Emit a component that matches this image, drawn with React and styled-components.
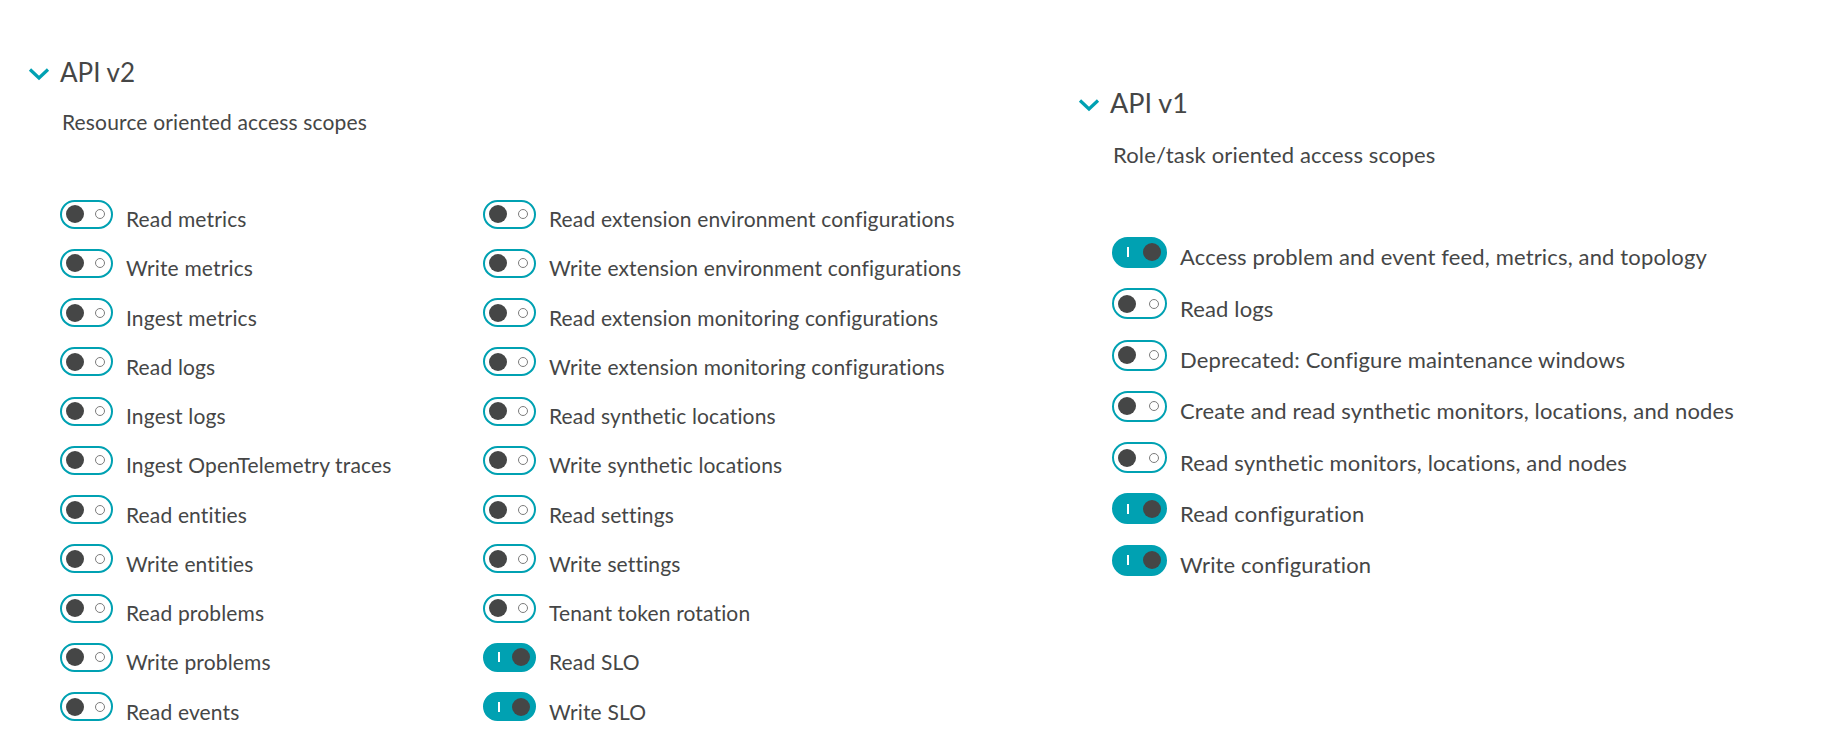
import styled, { createGlobalStyle } from "styled-components";

const GlobalStyle = createGlobalStyle`
  body {
    margin: 0;
    background: #ffffff;
    font-family: "Lato", "Open Sans", sans-serif;
    color: #454646;
  }
`;

const Page = styled.div`
  display: flex;
  width: 1824px;
  height: 736px;
  overflow: hidden;
  box-sizing: border-box;
`;

const Section = styled.section`
  display: flex;
  flex-direction: column;
  padding-top: ${p => (p.$big ? "85px" : "55px")};
  padding-left: 28px;
  width: ${p => (p.$big ? "auto" : "1050px")};
  box-sizing: border-box;
`;

const Header = styled.div`
  display: flex;
  align-items: flex-start;
  gap: 10px;
`;

const ChevronBox = styled.span`
  display: flex;
  margin-top: ${p => (p.$big ? "13px" : "12px")};
`;

const Title = styled.h2`
  margin: 2px 0 0;
  font-size: ${p => (p.$big ? "27px" : "26px")};
  line-height: 1.2;
  font-weight: 400;
  color: #454646;
`;

const Subtitle = styled.p`
  margin: ${p => (p.$big ? "23px 0 58px 35px" : "21px 0 55px 34px")};
  font-size: ${p => (p.$big ? "22px" : "21px")};
  letter-spacing: 0.15px;
  line-height: 1.2;
  color: #454646;
`;

const ScopeGrid = styled.div`
  display: grid;
  grid-auto-flow: column;
  grid-template-rows: repeat(${p => p.$rows}, ${p => (p.$big ? "51.3px" : "49.25px")});
  grid-template-columns: ${p => (p.$big ? "auto" : "423px 423px")};
  padding-left: ${p => (p.$big ? "34px" : "32px")};
`;

const Row = styled.label`
  display: flex;
  align-items: center;
  gap: 13px;
  font-size: ${p => (p.$big ? "22px" : "21px")};
  letter-spacing: 0.15px;
  color: #454646;
  white-space: nowrap;
`;

const LabelText = styled.span`
  margin-top: 9px;
`;

const Track = styled.span`
  position: relative;
  display: inline-flex;
  align-items: center;
  flex-shrink: 0;
  width: ${p => (p.$big ? "55px" : "53px")};
  height: ${p => (p.$big ? "31px" : "29px")};
  border: 2px solid #00a1b2;
  border-radius: 16px;
  box-sizing: border-box;
  background: ${p => (p.$on ? "#00a1b2" : "#ffffff")};
`;

const Knob = styled.span`
  position: absolute;
  top: 50%;
  ${p => (p.$on ? "right: 4px;" : "left: 4px;")}
  width: 18px;
  height: 18px;
  margin-top: -9px;
  border-radius: 50%;
  background: #454646;
`;

const OffMark = styled.span`
  position: absolute;
  top: 50%;
  right: 6px;
  width: 10px;
  height: 10px;
  margin-top: -5px;
  border-radius: 50%;
  border: 1.5px solid #7c7c7c;
  box-sizing: border-box;
`;

const OnMark = styled.span`
  position: absolute;
  top: 50%;
  left: 13px;
  width: 2px;
  height: 10px;
  margin-top: -5px;
  background: #ffffff;
`;

const Chevron = ({ big }) => (
  <ChevronBox $big={big}>
    <svg width="22" height="14" viewBox="0 0 22 14">
      <path d="M2 2.5 L11 11 L20 2.5" fill="none" stroke="#00a1b2" strokeWidth="3.2" />
    </svg>
  </ChevronBox>
);

const Toggle = ({ on, big }) => (
  <Track $on={on} $big={big}>
    {on ? <OnMark /> : <OffMark />}
    <Knob $on={on} />
  </Track>
);

const v2Scopes = [
  ["Read metrics", false],
  ["Write metrics", false],
  ["Ingest metrics", false],
  ["Read logs", false],
  ["Ingest logs", false],
  ["Ingest OpenTelemetry traces", false],
  ["Read entities", false],
  ["Write entities", false],
  ["Read problems", false],
  ["Write problems", false],
  ["Read events", false],
  ["Read extension environment configurations", false],
  ["Write extension environment configurations", false],
  ["Read extension monitoring configurations", false],
  ["Write extension monitoring configurations", false],
  ["Read synthetic locations", false],
  ["Write synthetic locations", false],
  ["Read settings", false],
  ["Write settings", false],
  ["Tenant token rotation", false],
  ["Read SLO", true],
  ["Write SLO", true],
];

const v1Scopes = [
  ["Access problem and event feed, metrics, and topology", true],
  ["Read logs", false],
  ["Deprecated: Configure maintenance windows", false],
  ["Create and read synthetic monitors, locations, and nodes", false],
  ["Read synthetic monitors, locations, and nodes", false],
  ["Read configuration", true],
  ["Write configuration", true],
];

const ScopeSection = ({ title, subtitle, scopes, rows, big }) => (
  <Section $big={big}>
    <Header>
      <Chevron big={big} />
      <Title $big={big}>{title}</Title>
    </Header>
    <Subtitle $big={big}>{subtitle}</Subtitle>
    <ScopeGrid $rows={rows} $big={big}>
      {scopes.map(([label, on]) => (
        <Row key={label} $big={big}>
          <Toggle on={on} big={big} />
          <LabelText>{label}</LabelText>
        </Row>
      ))}
    </ScopeGrid>
  </Section>
);

const App = () => (
  <>
    <GlobalStyle />
    <Page>
      <ScopeSection
        title="API v2"
        subtitle="Resource oriented access scopes"
        scopes={v2Scopes}
        rows={11}
      />
      <ScopeSection
        big
        title="API v1"
        subtitle="Role/task oriented access scopes"
        scopes={v1Scopes}
        rows={7}
      />
    </Page>
  </>
);

export default App;
